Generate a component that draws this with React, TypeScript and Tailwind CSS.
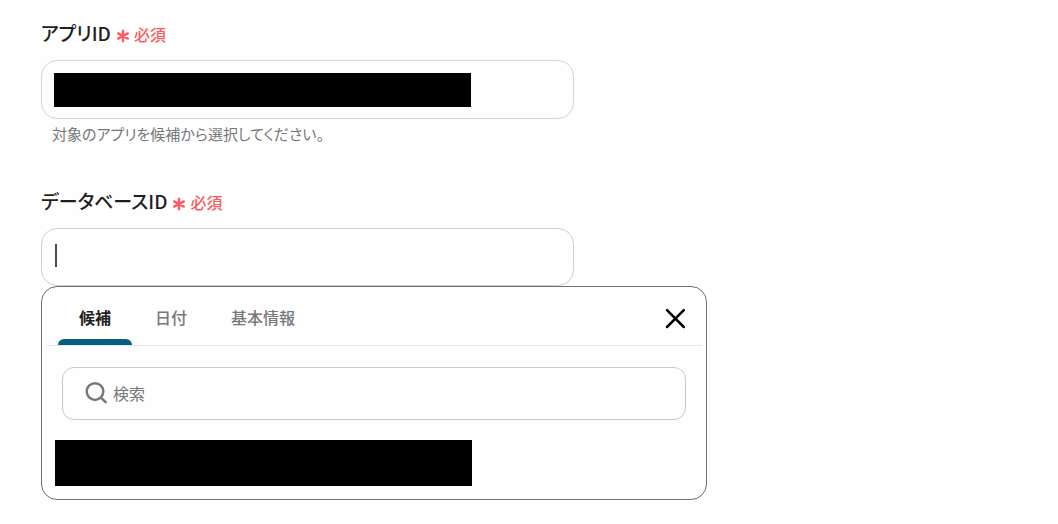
import { useState, type ReactNode } from "react";

const TABS = ["候補", "日付", "基本情報"];

function FieldLabel({ htmlFor, children }: { htmlFor: string; children: ReactNode }) {
  return (
    <label htmlFor={htmlFor} className="flex h-6 items-center gap-[5px] text-[19px] leading-6 font-medium text-[#1f1f23]">
      <span>{children}</span>
      <span className="flex items-center gap-1 pt-0.5 text-[16px] text-[#ff5a5f]">
        <svg viewBox="0 0 14 14" className="mt-1 size-3.5" fill="none" stroke="currentColor" strokeWidth="2.4" strokeLinecap="round" aria-hidden="true">
          <path d="M7 1.8v10.4M2.2 4.4l9.6 5.2M11.8 4.4L2.2 9.6" />
        </svg>
        必須
      </span>
    </label>
  );
}

function SuggestionPanel() {
  const [active, setActive] = useState(0);
  return (
    <section className="w-full max-w-[666px] rounded-2xl border border-[#6f6f73] bg-[#fefefe] pb-[13px]">
      <div className="mx-1 flex h-[59px] items-stretch justify-between border-b border-[#e4e4e6] pr-4 pl-3">
        <div role="tablist" className="flex gap-0.5">
          {TABS.map((tab, i) => (
            <button
              key={tab}
              type="button"
              role="tab"
              aria-selected={i === active}
              onClick={() => setActive(i)}
              className={`flex flex-col items-stretch text-[16px] leading-6 ${i === active ? "font-bold text-[#1f1f23]" : "font-medium text-[#77777b]"}`}
            >
              <span className="flex flex-1 items-center px-[21px] pt-2">{tab}</span>
              <span className={`h-1.5 rounded-t-md ${i === active ? "bg-[#05607f]" : ""}`} />
            </button>
          ))}
        </div>
        <button type="button" aria-label="閉じる" className="pt-1 text-black">
          <svg viewBox="0 0 21 21" className="size-[21px]" fill="none" stroke="currentColor" strokeWidth="2.5" strokeLinecap="round" aria-hidden="true">
            <path d="M2 2.2l16.8 16.8M18.8 2.2L2 19" />
          </svg>
        </button>
      </div>
      <div className="mx-5 mt-[21px] flex h-[53px] items-center gap-1.5 rounded-xl border border-[#c9c9cc] px-[22px] pb-0.5">
        <svg viewBox="0 0 22 22" className="size-[22px] shrink-0" fill="none" stroke="#77777b" strokeWidth="2.5" strokeLinecap="round" aria-hidden="true">
          <circle cx="10" cy="9.6" r="8.3" />
          <path d="M16 15.6l4.6 4.6" />
        </svg>
        <input
          type="text"
          aria-label="検索"
          placeholder="検索"
          className="h-6 min-w-0 flex-1 bg-transparent text-[16px] leading-6 outline-none placeholder:text-[#77777b]"
        />
      </div>
      <button type="button" aria-label="候補 1" className="mx-[13px] mt-5 block h-[46px] w-full max-w-[417px] bg-black" />
    </section>
  );
}

export default function App() {
  return (
    <main
      lang="ja"
      className="min-h-screen bg-[#fefefe] px-[41px] pt-[21px] pb-6 [font-family:'Noto_Sans_CJK_JP','Noto_Sans',sans-serif] [font-feature-settings:'palt']"
    >
      <div className="max-w-[533px]">
        <FieldLabel htmlFor="app-id">アプリID</FieldLabel>
        <div className="mt-[15px] flex h-[59px] items-center rounded-2xl border border-[#d3d5df] px-3">
          <input
            id="app-id"
            readOnly
            aria-describedby="app-id-help"
            className="h-[34px] w-full max-w-[417px] bg-black outline-none"
          />
        </div>
        <p id="app-id-help" className="mt-[3px] pl-[11px] text-[15px] leading-6 text-[#77777b]">
          対象のアプリを候補から選択してください。
        </p>
      </div>
      <div className="mt-[43px] max-w-[533px]">
        <FieldLabel htmlFor="database-id">データベースID</FieldLabel>
        <div className="mt-[15px] flex h-[58px] items-center rounded-2xl border border-[#cfcfd3] px-[13px] pb-1">
          <span aria-hidden="true" className="h-[23px] w-0.5 bg-[#4b4b4f]" />
          <input id="database-id" type="text" className="h-6 min-w-0 flex-1 bg-transparent caret-transparent outline-none" />
        </div>
      </div>
      <SuggestionPanel />
    </main>
  );
}
